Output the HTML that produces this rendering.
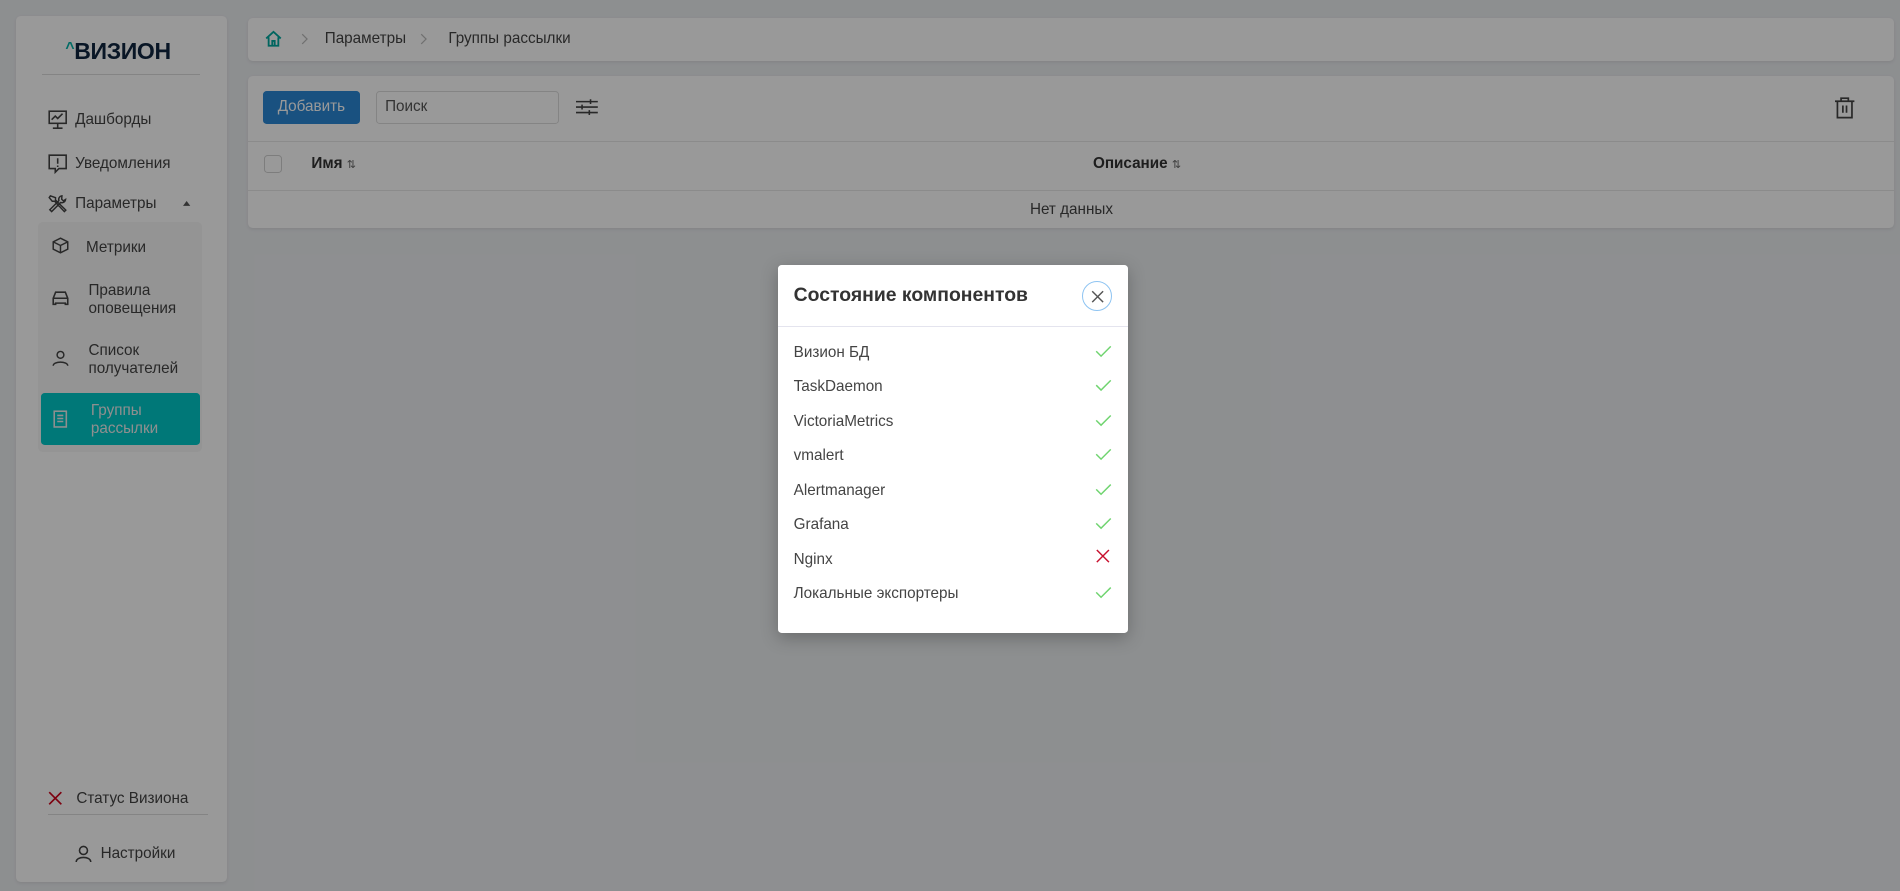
<!DOCTYPE html>
<html><head><meta charset="utf-8"><style>
*{box-sizing:border-box;margin:0;padding:0}
html,body{width:1900px;height:891px;overflow:hidden}
body{background:#eceef1;font-family:"Liberation Sans",Arial,sans-serif;color:#333}
#w{zoom:1.2117;position:relative;width:1568px;height:735px}
.abs{position:absolute}
.panel{position:absolute;background:#fff;border-radius:4px;box-shadow:0 1px 3px rgba(0,0,0,.08)}
.t{position:absolute;font-size:12.6px;color:#444;white-space:nowrap;line-height:15px}
svg{position:absolute;overflow:visible}
#ov{position:absolute;left:0;top:0;width:1568px;height:735px;background:rgba(0,0,0,.4)}
.row{position:absolute;left:13px;font-size:12.6px;color:#444}
</style></head><body><div id="w">
<div class="panel" style="left:13px;top:13px;width:174px;height:715px"></div>
<div class="t" style="left:54px;top:31px;font-size:19px;line-height:22px;font-weight:bold;color:#0f2540;letter-spacing:-0.3px"><span style="color:#00b3a8;font-size:13px;position:relative;top:-5px">^</span>ВИЗИОН</div>
<div class="abs" style="left:35px;top:61px;width:130px;height:1px;background:#ddd"></div>
<svg style="left:40px;top:91px" width="16" height="16" fill="none" stroke="#444" stroke-width="1.3"><rect x="1" y="1" width="14" height="10"/><path d="M8 11v4M4 15h8M3 8l3-3 2 2 4-4"/></svg>
<div class="t" style="left:62px;top:92px">Дашборды</div>
<svg style="left:40px;top:127px" width="16" height="16" fill="none" stroke="#444" stroke-width="1.3"><path d="M1 1h14v11H9l-3 3v-3H1z M8 3.5v4.5 M8 9.5v1.2"/></svg>
<div class="t" style="left:62px;top:128px">Уведомления</div>
<svg style="left:40px;top:160px" width="16" height="16" fill="none" stroke="#444" stroke-width="1.2"><path d="M2 1.5L1 3l2.5 3 2 0 8 8.5 1.2-1.2L6.2 5V3zM11.5 1.5a3 3 0 0 0-2.5 4L1.5 13l1.5 1.5 7.5-7.5a3 3 0 0 0 4-2.5l-1.8 1.2-1.4-1.4z"/></svg>
<div class="t" style="left:62px;top:161px">Параметры</div>
<svg style="left:151px;top:166px" width="6" height="4"><path d="M0 4L3 0 6 4z" fill="#555"/></svg>
<div class="abs" style="left:31px;top:183px;width:136px;height:190px;background:#f7f7f7;border-radius:4px"></div>
<svg style="left:43px;top:196px" width="14" height="14" fill="none" stroke="#444" stroke-width="1.2"><path d="M7 1l6 3v6l-6 3-6-3V4zM1 4l6 3 6-3M7 7v6"/></svg>
<div class="t" style="left:71px;top:197px">Метрики</div>
<svg style="left:43px;top:240px" width="14" height="12" fill="none" stroke="#444" stroke-width="1.3"><path d="M3 1h8l2 5v5h-2v-1H3v1H1V6zM1 6h12"/></svg>
<div class="t" style="left:73px;top:233px">Правила<br>оповещения</div>
<svg style="left:43px;top:289px" width="14" height="14" fill="none" stroke="#444" stroke-width="1.2"><circle cx="7" cy="4" r="2.8"/><path d="M1 13c0-4 12-4 12 0"/></svg>
<div class="t" style="left:73px;top:282px">Список<br>получателей</div>
<div class="abs" style="left:34px;top:324px;width:131px;height:43px;background:#00c8c8;border-radius:3px"></div>
<svg style="left:44px;top:338px" width="12" height="15" fill="none" stroke="#eee" stroke-width="1.3"><rect x="1" y="1" width="10" height="13"/><path d="M3.5 4.5h5M3.5 7h5M3.5 9.5h5"/></svg>
<div class="t" style="left:75px;top:332px;color:#eee">Группы<br>рассылки</div>
<svg style="left:40px;top:653px" width="12" height="12" stroke="#d0021b" stroke-width="1.4"><path d="M1 1l10 10M11 1L1 11"/></svg>
<div class="t" style="left:63px;top:652px">Статус Визиона</div>
<div class="abs" style="left:40px;top:672px;width:132px;height:1px;background:#ddd"></div>
<svg style="left:62px;top:697px" width="14" height="14" fill="none" stroke="#444" stroke-width="1.3"><circle cx="7" cy="4.5" r="3.3"/><path d="M1 14c0-5 12-5 12 0"/></svg>
<div class="t" style="left:83px;top:697px">Настройки</div>
<div class="panel" style="left:205px;top:15px;width:1358px;height:35px"></div>
<svg style="left:219px;top:25px" width="14" height="14" fill="none" stroke="#00a89f" stroke-width="1.5"><path d="M1 7L7 1.5 13 7M3 6v7h8V6M6 13V9h2v4"/></svg>
<svg style="left:248px;top:27px" width="6" height="10" fill="none" stroke="#bbb"><path d="M1 1l4 4-4 4"/></svg>
<div class="t" style="left:268px;top:25px">Параметры</div>
<svg style="left:347px;top:27px" width="6" height="10" fill="none" stroke="#bbb"><path d="M1 1l4 4-4 4"/></svg>
<div class="t" style="left:370px;top:25px">Группы рассылки</div>
<div class="panel" style="left:205px;top:63px;width:1358px;height:125px"></div>
<div class="abs" style="left:217px;top:75px;width:80px;height:27px;background:#2a88d6;border-radius:3px;color:#fff;font-size:12.6px;line-height:27px;text-align:center">Добавить</div>
<div class="abs" style="left:310px;top:75px;width:151px;height:27px;border:1px solid #ddd;border-radius:3px;font-size:12.6px;line-height:25px;padding-left:7px;color:#555">Поиск</div>
<svg style="left:475px;top:81px" width="18" height="15" fill="none" stroke="#444" stroke-width="1.3"><path d="M0 3h18M0 7.5h18M0 12h18M12 1v4M5 5.5v4M11 10v4"/></svg>
<svg style="left:1514px;top:80px" width="16" height="18" fill="none" stroke="#444" stroke-width="1.4"><path d="M0 3.5h16M5 3.5V1h6v2.5M2 3.5V17h12V3.5M6.5 7v6M9.5 7v6"/></svg>
<div class="abs" style="left:205px;top:116px;width:1358px;height:1px;background:#e8e8e8"></div>
<div class="abs" style="left:218px;top:128px;width:15px;height:15px;border:1px solid #d0d0d0;border-radius:3px;background:#fff"></div>
<div class="t" style="left:257px;top:128px;font-weight:bold;color:#333">Имя <span style="font-size:9px;font-weight:normal;color:#666">⇅</span></div>
<div class="t" style="left:902px;top:128px;font-weight:bold;color:#333">Описание <span style="font-size:9px;font-weight:normal;color:#666">⇅</span></div>
<div class="abs" style="left:205px;top:157px;width:1358px;height:1px;background:#e8e8e8"></div>
<div class="t" style="left:850px;top:166px">Нет данных</div>
<div id="ov"></div>
<div class="abs" style="left:642px;top:219px;width:289px;height:303px;background:#fff;border-radius:3px;box-shadow:0 4px 14px rgba(0,0,0,.25)">
<div class="abs" style="left:13px;top:15px;font-size:16px;font-weight:bold;color:#333">Состояние компонентов</div>
<div class="abs" style="left:251px;top:13px;width:25px;height:25px;border:1px solid #8ec4f2;border-radius:50%"></div>
<svg style="left:258px;top:20px" width="11" height="11" stroke="#555" stroke-width="1.2"><path d="M1 1l9 9M10 1l-9 9"/></svg>
<div class="abs" style="left:0;top:50px;width:289px;height:1px;background:#e4e4ee"></div>
<div class="row" style="top:65px">Визион БД</div>
<div class="row" style="top:93px">TaskDaemon</div>
<div class="row" style="top:122px">VictoriaMetrics</div>
<div class="row" style="top:150px">vmalert</div>
<div class="row" style="top:179px">Alertmanager</div>
<div class="row" style="top:207px">Grafana</div>
<div class="row" style="top:236px">Nginx</div>
<div class="row" style="top:264px">Локальные экспортеры</div>
<svg style="left:262px;top:65px" width="14" height="230" fill="none" stroke="#6fd46f" stroke-width="1.2">
<path d="M1 6l4 4 8-8"/><path d="M1 34l4 4 8-8"/><path d="M1 63l4 4 8-8"/><path d="M1 91l4 4 8-8"/><path d="M1 120l4 4 8-8"/><path d="M1 148l4 4 8-8"/><path d="M1 205l4 4 8-8"/>
<path d="M1.5 170l10 10M11.5 170l-10 10" stroke="#c8102e"/></svg>
</div>
</div></body></html>
